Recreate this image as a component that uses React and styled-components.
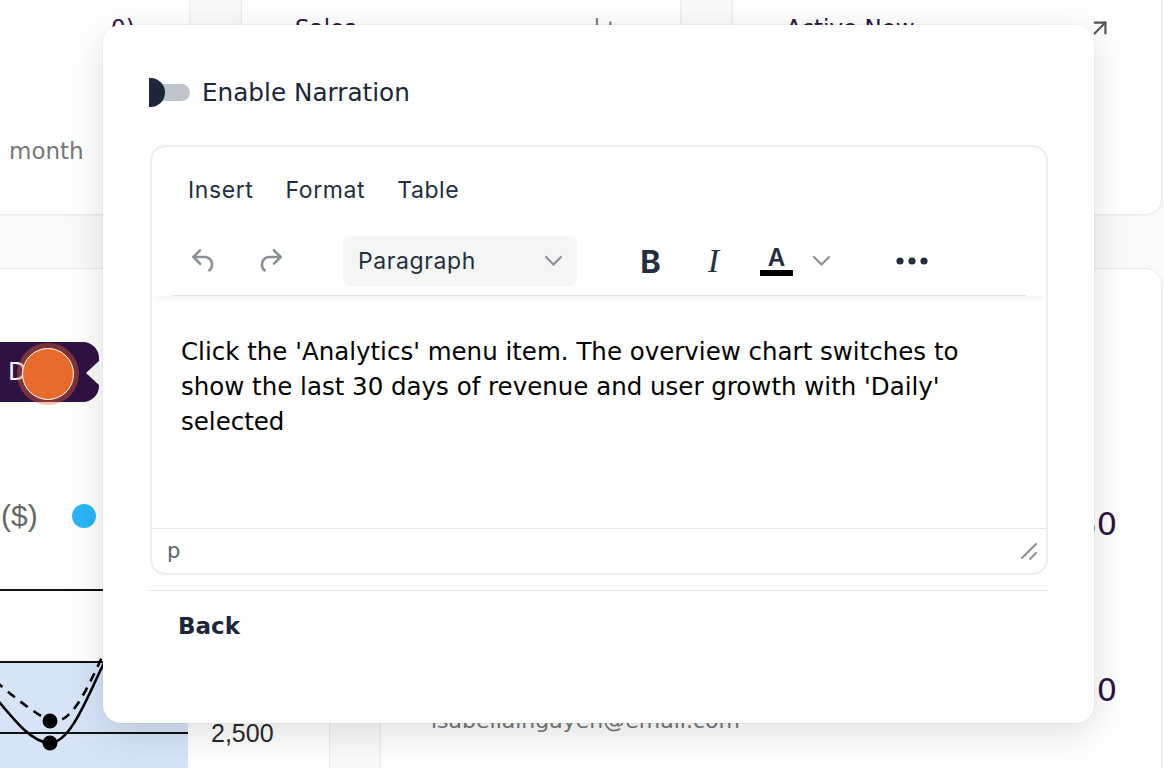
import React from 'react'
import styled, { createGlobalStyle } from 'styled-components'
import { ArrowUpRight } from 'lucide-react'

const GlobalStyle = createGlobalStyle`
  html, body {
    margin: 0;
    padding: 0;
    background: #fafafa;
  }
  * { box-sizing: border-box; }
`

const brand = '"DejaVu Sans", "Noto Sans", sans-serif'
const chrome = 'Inter, "Noto Sans", sans-serif'

const Page = styled.div`
  position: relative;
  width: 1164px;
  height: 768px;
  overflow: hidden;
  background: #fafafa;
  font-family: ${brand};
`

const TopRow = styled.div`
  display: grid;
  grid-template-columns: 220px 440px 430px;
  column-gap: 51px;
  margin: -40px 0 0 -30px;
`

const Card = styled.div`
  position: relative;
  height: ${p => p.$h || 255}px;
  background: #fff;
  border: 1px solid #ececec;
  border-radius: 16px;
  box-shadow: 0 1px 3px rgba(0, 0, 0, 0.04);
  display: flex;
  flex-direction: column;
  padding: 52px ${p => p.$pr || 20}px 0 ${p => p.$pl || 20}px;
`

const CardHead = styled.div`
  display: flex;
  align-items: center;
  justify-content: space-between;
  height: 30px;
  font-size: 23px;
  color: #2d1243;
  svg { color: #555; }
`

const Plus = styled.span`
  margin-right: 40px;
  color: #777;
`

const Muted = styled.div`
  margin-top: 93px;
  margin-left: -102px;
  font-size: 23px;
  line-height: 30px;
  color: #777;
`

const BottomRow = styled.div`
  display: grid;
  grid-template-columns: 360px 782px;
  column-gap: 50px;
  margin: 53px 0 0 -30px;
`

const ChartCard = styled(Card)`
  height: 560px;
  padding: 232px 0 0 30px;
`

const Legend = styled.div`
  display: flex;
  align-items: center;
  gap: 34px;
  height: 30px;
  font-family: "Liberation Sans", Arial, sans-serif;
  font-size: 30px;
  color: #666;
`

const Dot = styled.span`
  width: 24px;
  height: 24px;
  border-radius: 50%;
  background: #29b6f6;
`

const ChartArea = styled.div`
  display: grid;
  grid-template-columns: 217px 1fr;
  margin: 30px 0 0 -30px;
`

const AxisLabels = styled.div`
  display: flex;
  flex-direction: column;
  gap: 47px;
  padding: 16px 0 0 23px;
  font-family: "Liberation Sans", Arial, sans-serif;
  font-size: 25px;
  line-height: 25px;
  color: #2a2a2a;
`

const Tip = styled.div`
  position: absolute;
  left: 0;
  top: 73px;
  width: 128px;
  height: 60px;
  border-radius: 0 16px 16px 0;
  background: #2e1244;
  color: #fff;
  font-size: 24px;
  display: flex;
  align-items: center;
  padding-left: 37px;
  &::after {
    content: '';
    position: absolute;
    right: -1px;
    top: 18px;
    border-top: 13px solid transparent;
    border-bottom: 13px solid transparent;
    border-right: 14px solid #fafafa;
  }
`

const Marker = styled.span`
  position: absolute;
  left: 46px;
  top: 74px;
  width: 62px;
  height: 62px;
  border-radius: 50%;
  background: rgba(233, 106, 43, 0.4);
  display: flex;
  align-items: center;
  justify-content: center;
  &::after {
    content: '';
    width: 50px;
    height: 50px;
    border-radius: 50%;
    background: #ea6a2c;
    border: 1.5px solid #fff;
  }
`

const TableCard = styled(Card)`
  height: 560px;
  padding: 172px 44px 0 50px;
`

const Row = styled.div`
  display: grid;
  grid-template-columns: 1fr auto;
  align-items: center;
  height: 166px;
`

const Person = styled.div`
  display: flex;
  flex-direction: column;
  gap: 14px;
  padding-top: 22px;
  font-size: 22px;
  line-height: 26px;
  color: #2d1243;
  span { color: #777; }
`

const Value = styled.div`
  font-size: 32px;
  color: #2d1243;
`

/* modal */

const Modal = styled.div`
  position: absolute;
  left: 103px;
  top: 25px;
  width: 991px;
  height: 698px;
  background: #fff;
  border-radius: 18px;
  box-shadow: 0 10px 40px rgba(0, 0, 0, 0.13), 0 0 0 1px rgba(0, 0, 0, 0.03);
  padding: 53px 46px 0 45px;
  display: flex;
  flex-direction: column;
`

const ToggleRow = styled.label`
  display: flex;
  align-items: center;
  gap: 12px;
  height: 29px;
  font-size: 24.7px;
  color: #1b2638;
`

const Toggle = styled.span`
  position: relative;
  width: 41px;
  height: 29px;
  margin-left: 1px;
  overflow: hidden;
  &::before {
    content: '';
    position: absolute;
    left: 0;
    right: 0;
    top: 6px;
    height: 17px;
    border-radius: 9px;
    background: #bfc3ca;
  }
  &::after {
    content: '';
    position: absolute;
    left: -13px;
    top: 0;
    width: 29px;
    height: 29px;
    border-radius: 50%;
    background: #1b2638;
  }
`

const Editor = styled.div`
  margin: 38px 0 0 2px;
  height: 430px;
  border: 2px solid #ededed;
  border-radius: 16px;
  display: flex;
  flex-direction: column;
  overflow: hidden;
  font-family: ${chrome};
  color: #222f3e;
`

const Header = styled.div`
  padding-top: 17px;
  box-shadow: 0 4px 8px -3px rgba(0, 0, 0, 0.07);
  position: relative;
  z-index: 1;
`

const MenuBar = styled.div`
  display: flex;
  padding: 0 20px;
  height: 50px;
`

const MenuButton = styled.button`
  border: 0;
  background: none;
  padding: 2px 16px 0;
  font: inherit;
  font-size: 23px;
  letter-spacing: 0.6px;
  color: #222f3e;
`

const Toolbar = styled.div`
  display: flex;
  align-items: center;
  gap: 48px;
  margin: 22px 20px 0;
  padding: 0 0 9px 6px;
  border-bottom: 1px solid #e3e3e3;
`

const Group = styled.div`
  display: flex;
  align-items: center;
  gap: ${p => p.$gap || 12}px;
`

const ToolButton = styled.button`
  width: ${p => p.$w || 51}px;
  height: 50px;
  border: 0;
  border-radius: 6px;
  background: none;
  padding: 0;
  display: flex;
  align-items: center;
  justify-content: center;
  color: ${p => (p.$off ? '#8c9197' : '#222f3e')};
`

const Select = styled.button`
  width: 234px;
  height: 50px;
  border: 0;
  border-radius: 7px;
  background: #f5f5f5;
  display: flex;
  align-items: center;
  justify-content: space-between;
  padding: 0 14px 0 15px;
  font: inherit;
  font-size: 23px;
  letter-spacing: 0.6px;
  color: #222f3e;
  svg { color: #8c9197; }
`

const BoldGlyph = styled.span`
  font-family: Inter, sans-serif;
  font-weight: 700;
  font-size: 31px;
  line-height: 1;
`

const ItalicGlyph = styled.span`
  font-family: "Liberation Serif", serif;
  font-style: italic;
  font-size: 34px;
  line-height: 1;
`

const ColorGlyph = styled.span`
  display: flex;
  flex-direction: column;
  align-items: center;
  font-family: Inter, sans-serif;
  font-weight: 600;
  font-size: 24px;
  line-height: 22px;
  &::after {
    content: '';
    width: 33px;
    height: 6px;
    margin-top: 1px;
    background: #000;
  }
`

const Content = styled.div`
  flex: 1;
  padding: 38px 59px 0 29px;
  font-family: ${brand};
  font-size: 24.5px;
  line-height: 35px;
  color: #000;
`

const StatusBar = styled.div`
  height: 45px;
  border-top: 1px solid #e6e6e6;
  display: flex;
  align-items: center;
  justify-content: space-between;
  padding: 0 6px 0 15px;
  font-family: ${brand};
  font-size: 21px;
  color: #5e646b;
`

const Divider = styled.div`
  height: 1px;
  margin-top: 15px;
  background: #e5e7eb;
`

const Footer = styled.div`
  display: flex;
  padding: 22px 0 0 30px;
`

const BackButton = styled.button`
  border: 0;
  background: none;
  padding: 0;
  font-family: ${brand};
  font-size: 23px;
  font-weight: 700;
  color: #1b2638;
`

const Icon = ({ d, size = 32 }) => (
  <svg width={size} height={size} viewBox="0 0 24 24" fill="currentColor">
    <path d={d} />
  </svg>
)

const undo = 'M6.4 8H12c3.7 0 6.2 2 6.8 5.1.6 2.7-.4 5.6-2.3 6.8a1 1 0 0 1-1-1.8c1.1-.7 1.8-2.7 1.4-4.6-.5-2.1-2.1-3.5-4.9-3.5H6.4l3.3 3.3a1 1 0 1 1-1.4 1.4l-5-5a1 1 0 0 1 0-1.4l5-5a1 1 0 0 1 1.4 1.4L6.4 8Z'
const redo = 'M17.6 10H12c-2.8 0-4.4 1.4-4.9 3.5-.4 2 .3 3.9 1.4 4.6a1 1 0 1 1-1 1.8c-2-1.2-2.9-4.1-2.3-6.8.6-3 3-5.1 6.8-5.1h5.6l-3.3-3.3a1 1 0 1 1 1.4-1.4l5 5a1 1 0 0 1 0 1.4l-5 5a1 1 0 0 1-1.4-1.4l3.3-3.3Z'

const Chevron = () => (
  <svg width="19" height="12" viewBox="0 0 19 12" fill="none" stroke="currentColor" strokeWidth="2.2" strokeLinecap="round">
    <path d="M2 2l7.5 7.5L17 2" />
  </svg>
)

const Dots = () => (
  <svg width="32" height="8" viewBox="0 0 32 8" fill="#222f3e">
    <circle cx="4" cy="4" r="3.6" />
    <circle cx="16" cy="4" r="3.6" />
    <circle cx="28" cy="4" r="3.6" />
  </svg>
)

const Resize = () => (
  <svg width="22" height="22" viewBox="0 0 22 22" stroke="#8c9197" strokeWidth="2" strokeLinecap="round">
    <path d="M4 18L18 4M12 19l6-6" />
  </svg>
)

// chart drawn in card coords: x 0 is page x -30, y 0 is page y 560
const Chart = () => (
  <svg width="217" height="208" viewBox="0 0 217 208">
    <rect x="0" y="101" width="217" height="107" fill="#d7e4f8" />
    <g stroke="#111" strokeWidth="1.8">
      <line x1="0" y1="29" x2="217" y2="29" />
      <line x1="0" y1="101" x2="217" y2="101" />
      <line x1="0" y1="172" x2="217" y2="172" />
    </g>
    <path d="M0 100 C 20 115, 50 145, 79 160 C 100 165, 115 130, 133 92 L 160 40" fill="none" stroke="#000" strokeWidth="2.6" strokeDasharray="9 7" />
    <path d="M0 108 C 30 140, 55 182, 79 182 C 100 182, 118 132, 133 102 L 160 50" fill="none" stroke="#000" strokeWidth="2.6" />
    <circle cx="79" cy="160" r="7.5" fill="#000" />
    <circle cx="79" cy="182" r="7.5" fill="#000" />
  </svg>
)

export default function App() {
  return (
    <Page>
      <GlobalStyle />
      <TopRow>
        <Card $pl={140}>
          <CardHead>0)</CardHead>
          <Muted>month</Muted>
        </Card>
        <Card $pl={53}>
          <CardHead>Sales <Plus>|+</Plus></CardHead>
        </Card>
        <Card $pl={53} $pr={48}>
          <CardHead>Active Now <ArrowUpRight size={26} strokeWidth={2} /></CardHead>
        </Card>
      </TopRow>

      <BottomRow>
        <ChartCard>
          <Tip>D</Tip>
          <Marker />
          <Legend>($) <Dot /></Legend>
          <ChartArea>
            <Chart />
            <AxisLabels>
              <span>7,500</span>
              <span>5,000</span>
              <span>2,500</span>
            </AxisLabels>
          </ChartArea>
        </ChartCard>
        <TableCard>
          <Row>
            <Person>Liam Carter<span>liamcarter@email.com</span></Person>
            <Value>$2,480</Value>
          </Row>
          <Row>
            <Person>Isabella Ingayen<span>isabellaingayen@email.com</span></Person>
            <Value>$1,950</Value>
          </Row>
        </TableCard>
      </BottomRow>

      <Modal>
        <ToggleRow>
          <Toggle />
          Enable Narration
        </ToggleRow>

        <Editor>
          <Header>
            <MenuBar>
              <MenuButton>Insert</MenuButton>
              <MenuButton>Format</MenuButton>
              <MenuButton>Table</MenuButton>
            </MenuBar>
            <Toolbar>
              <Group $gap={15}>
                <ToolButton $off><Icon d={undo} /></ToolButton>
                <ToolButton $off><Icon d={redo} /></ToolButton>
              </Group>
              <Select>
                Paragraph
                <Chevron />
              </Select>
              <Group $gap={12}>
                <ToolButton><BoldGlyph>B</BoldGlyph></ToolButton>
                <ToolButton><ItalicGlyph>I</ItalicGlyph></ToolButton>
                <Group $gap={2}>
                  <ToolButton><ColorGlyph>A</ColorGlyph></ToolButton>
                  <ToolButton $w={34} $off><Chevron /></ToolButton>
                </Group>
              </Group>
              <ToolButton><Dots /></ToolButton>
            </Toolbar>
          </Header>
          <Content>
            Click the 'Analytics' menu item. The overview chart switches to show the last 30 days of revenue and user growth with 'Daily' selected
          </Content>
          <StatusBar>
            p
            <Resize />
          </StatusBar>
        </Editor>

        <Divider />
        <Footer>
          <BackButton>Back</BackButton>
        </Footer>
      </Modal>
    </Page>
  )
}
